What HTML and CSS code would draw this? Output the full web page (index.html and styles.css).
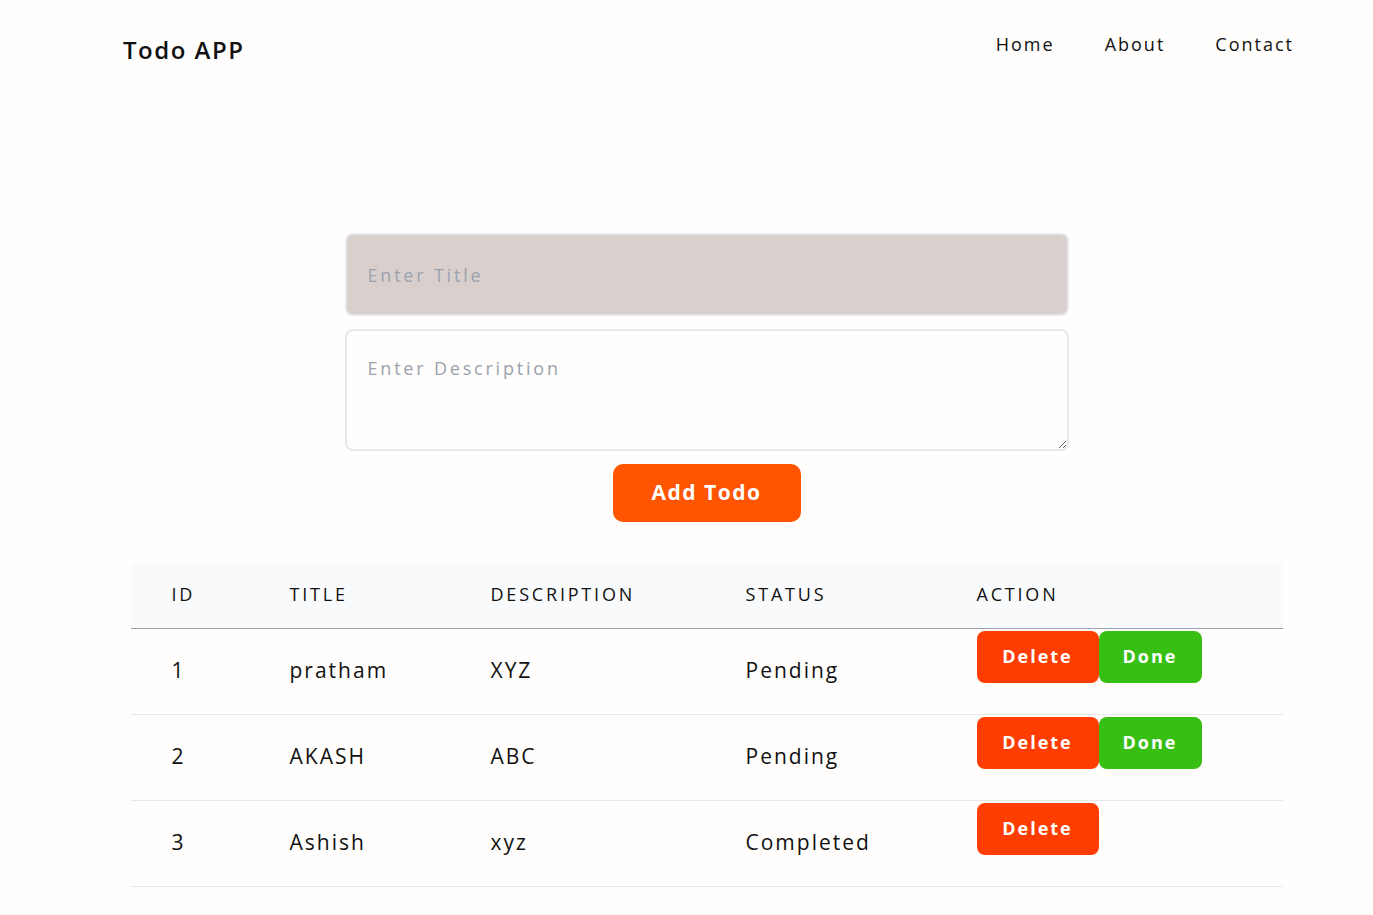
FILE: index.html
```html
<!DOCTYPE html>
<html lang="en">
<head>
<meta charset="utf-8">
<title>Todo APP</title>
<link rel="stylesheet" href="styles.css">
</head>
<body>
<header class="nav">
  <div class="brand">Todo APP</div>
  <nav class="links">
    <a href="#">Home</a>
    <a href="#">About</a>
    <a href="#">Contact</a>
  </nav>
</header>
<main class="main">
  <form class="form">
    <input class="title-input" type="text" placeholder="Enter Title">
    <textarea class="desc-input" placeholder="Enter Description"></textarea>
    <button class="add-btn" type="button">Add Todo</button>
  </form>
  <table class="todos">
    <colgroup>
      <col class="c1"><col class="c2"><col class="c3"><col class="c4"><col class="c5">
    </colgroup>
    <thead>
      <tr><th>ID</th><th>TITLE</th><th>DESCRIPTION</th><th>STATUS</th><th>ACTION</th></tr>
    </thead>
    <tbody>
      <tr>
        <td>1</td><td>pratham</td><td>XYZ</td><td>Pending</td>
        <td class="act"><div class="btns"><button class="del">Delete</button><button class="done">Done</button></div></td>
      </tr>
      <tr>
        <td>2</td><td>AKASH</td><td>ABC</td><td>Pending</td>
        <td class="act"><div class="btns"><button class="del">Delete</button><button class="done">Done</button></div></td>
      </tr>
      <tr>
        <td>3</td><td>Ashish</td><td>xyz</td><td>Completed</td>
        <td class="act"><div class="btns"><button class="del">Delete</button></div></td>
      </tr>
    </tbody>
  </table>
</main>
</body>
</html>
```
FILE: styles.css
```css
* { box-sizing: border-box; }
html, body { margin: 0; padding: 0; }
body {
  background: #fffefc;
  color: #111;
  font-family: "Open Sans", "DejaVu Sans", sans-serif;
}
.nav {
  display: flex;
  justify-content: space-between;
  align-items: flex-start;
  padding: 32px 82px 0 123px;
  height: 100px;
}
.brand {
  font-size: 24px;
  font-weight: 600;
  letter-spacing: 1.5px;
  line-height: 36px;
}
.links {
  display: flex;
  gap: 50px;
  margin-top: -2px;
  margin-right: -3px;
}
.links a {
  color: #111;
  text-decoration: none;
  font-size: 18px;
  letter-spacing: 2px;
  line-height: 28px;
}
.main {
  padding-top: 133px;
  padding-left: 40px;
}
.form {
  width: 724px;
  margin: 0 auto;
  display: flex;
  flex-direction: column;
  align-items: center;
  gap: 13px;
}
.title-input, .desc-input {
  width: 100%;
  border: 2px solid #e5e7eb;
  border-radius: 8px;
  font-family: inherit;
  font-size: 18px;
  letter-spacing: 2.8px;
  padding: 0 21px;
  color: #111;
  outline: none;
}
.title-input {
  height: 83px;
  background: #d9d0ce;
}
.desc-input {
  height: 122px;
  background: #fffefc;
  padding-top: 25px;
  resize: vertical;
  display: block;
}
::placeholder { color: #9aa2ae; opacity: 1; }
.add-btn {
  width: 188px;
  height: 58px;
  border: none;
  border-radius: 10px;
  background: #ff5500;
  color: #fff;
  font-family: inherit;
  font-size: 21px;
  font-weight: 700;
  letter-spacing: 1.5px;
  padding: 0 0 2px;
}
.todos {
  width: 1152px;
  margin: 41px auto 0;
  border-collapse: collapse;
  table-layout: fixed;
}
.c1 { width: 118px; }
.c2 { width: 201px; }
.c3 { width: 255px; }
.c4 { width: 231px; }
.c5 { width: 347px; }
th {
  background: #f9fafb;
  height: 65px;
  text-align: left;
  font-weight: 400;
  font-size: 18px;
  letter-spacing: 2.8px;
  padding: 0 0 2px 41px;
  border-bottom: 1px solid #9ca3af;
}
td {
  height: 86px;
  padding: 0 0 2px 41px;
  font-size: 21px;
  letter-spacing: 2px;
  border-bottom: 1px solid #e5e7eb;
}
td.act {
  vertical-align: top;
  padding-top: 2px;
}
.btns { display: flex; }
.btns button {
  height: 52px;
  border: none;
  border-radius: 8px;
  color: #fff;
  font-family: inherit;
  font-size: 18px;
  font-weight: 700;
  letter-spacing: 2px;
  padding: 0 0 2px;
}
.del { width: 122px; background: #ff3d00; }
.done { width: 103px; background: #37bf14; letter-spacing: 1.5px; }
```
